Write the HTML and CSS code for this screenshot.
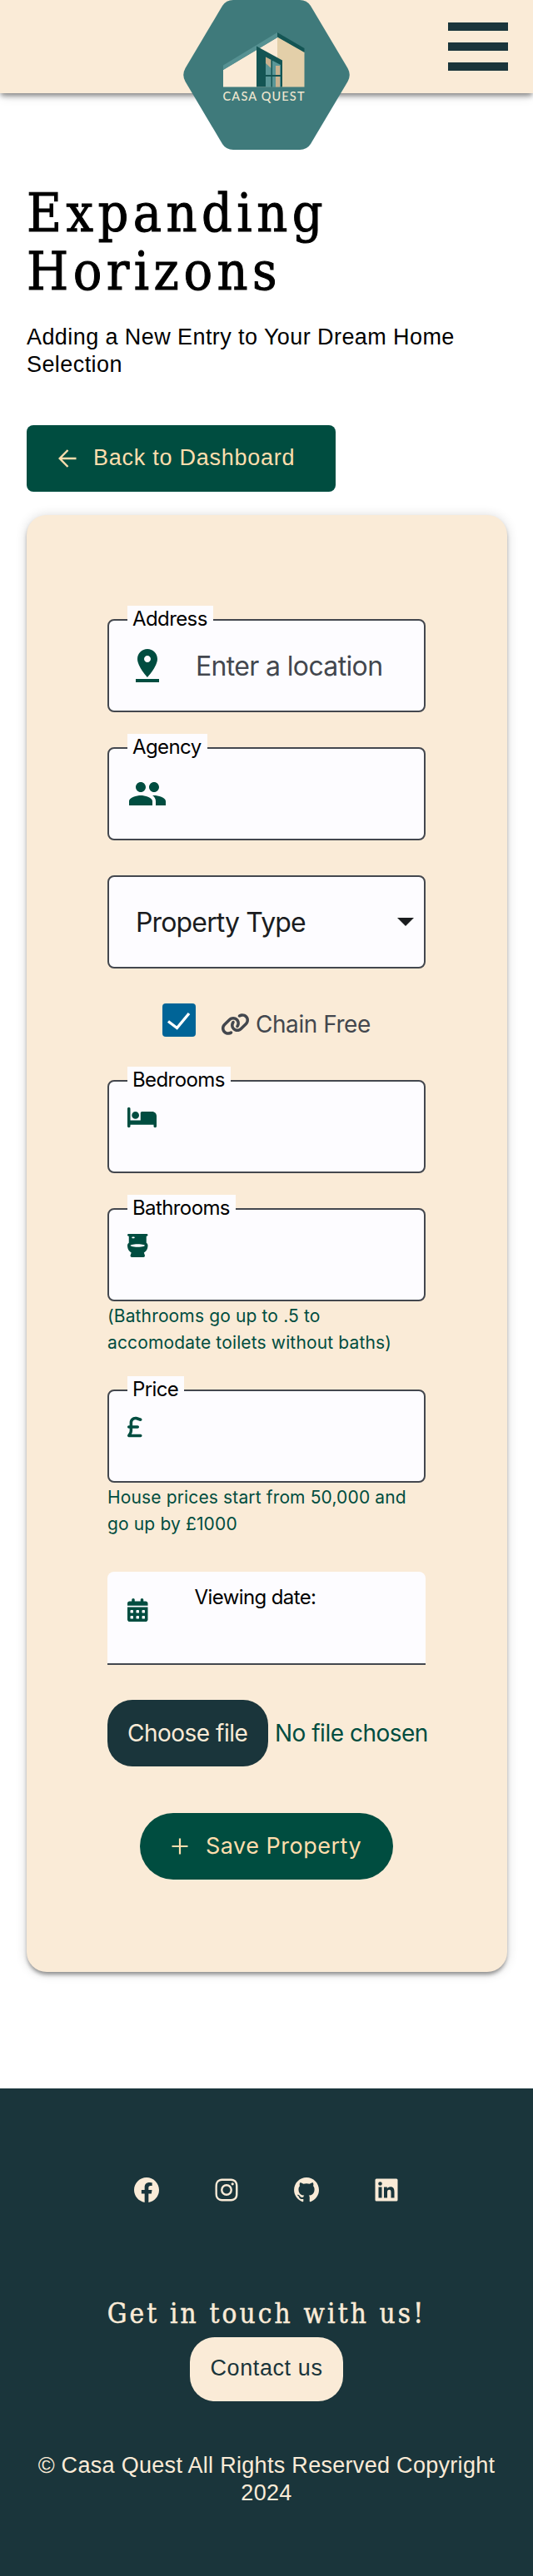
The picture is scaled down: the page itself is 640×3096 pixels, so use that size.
FILE: index.html
```html
<!DOCTYPE html>
<html lang="en">
<head>
<meta charset="utf-8">
<title>Casa Quest</title>
<link rel="stylesheet" href="styles.css">
</head>
<body>
<header class="header">
  <svg class="logo" width="200" height="180" viewBox="0 0 200 180">
    <path d="M60 0H140Q148.500 0 153 7L197.500 82Q202 90 197.500 98L153 173Q148.500 180 140 180H60Q51.500 180 47 173L2.500 98Q-2 90 2.500 82L47 7Q51.500 0 60 0Z" fill="#3f7a7b"/>
    <path d="M48 84L113 45V104.500H48Z" fill="#faebd7"/>
    <path d="M113 44L145.500 62.500V104.500H113Z" fill="#e3cfa9"/>
    <path d="M48 78.500L113 39V45L48 84Z" fill="#569192"/>
    <path d="M113 39L145.500 58V63L113 44.500Z" fill="#145554"/>
    <path d="M88 55.500L119 72.500V104.500H88Z" fill="#145554"/>
    <path d="M99 68.500L117 78V104.500H99Z" fill="#5a9697"/>
    <path d="M99 68.500L105.500 72V82L99 76ZM111 79H116V104.500H111Z" fill="#c9b18e"/>
    <path d="M105.500 72H107V104.500H105.500ZM99 90H117V92H99Z" fill="#145554"/>
    <text class="logo-name" x="47.500" y="120.500" textLength="98">CASA QUEST</text>
  </svg>
  <button class="menu" aria-label="Menu"><span class="bar"></span><span class="bar"></span><span class="bar"></span></button>
</header>

<main class="main">
  <h1 class="title">Expanding<br>Horizons</h1>
  <p class="lead">Adding a New Entry to Your Dream Home<br>Selection</p>
  <a class="btn back">
    <svg width="22" height="22" viewBox="0 0 22 22" fill="none" stroke="currentColor" stroke-width="2.400"><path d="M21.500 11H2M11.500 1L1.700 11L11.500 21"/></svg>
    <span>Back to Dashboard</span>
  </a>

  <form class="card">
    <div class="field">
      <label class="label">Address</label>
      <svg class="icon-md" viewBox="0 0 24 24"><path d="M18 8c0-3.310-2.690-6-6-6S6 4.690 6 8c0 4.500 6 11 6 11s6-6.500 6-11zm-8 0c0-1.100.9-2 2-2s2 .9 2 2-.89 2-2 2c-1.100 0-2-.9-2-2zM5 20v2h14v-2H5z"/></svg>
      <span class="placeholder">Enter a location</span>
    </div>
    <div class="field">
      <label class="label">Agency</label>
      <svg class="icon-md" viewBox="0 0 24 24"><path d="M16 11c1.660 0 2.990-1.340 2.990-3S17.660 5 16 5c-1.660 0-3 1.340-3 3s1.340 3 3 3zm-8 0c1.660 0 2.990-1.340 2.990-3S9.660 5 8 5C6.340 5 5 6.340 5 8s1.340 3 3 3zm0 2c-2.330 0-7 1.170-7 3.500V19h14v-2.500c0-2.330-4.670-3.500-7-3.500zm8 0c-.29 0-.62.02-.97.05 1.160.84 1.970 1.970 1.970 3.450V19h6v-2.500c0-2.330-4.670-3.500-7-3.500z"/></svg>
    </div>
    <div class="field select">
      <span>Property Type</span>
      <svg width="20" height="10" viewBox="0 0 20 10"><path d="M0 0H20L10 10Z" fill="#1a1c1e"/></svg>
    </div>
    <div class="check-row">
      <span class="checkbox"><svg width="40" height="40" viewBox="0 0 40 40" fill="none" stroke="#fff" stroke-width="3.400"><path d="M7 21.500L17.500 29.500L32 12"/></svg></span>
      <svg class="chain" viewBox="0 0 640 512"><path d="M579.800 267.700c56.500-56.500 56.500-148 0-204.500c-50-50-128.800-56.500-186.300-15.400l-1.600 1.100c-14.400 10.300-17.700 30.300-7.400 44.600s30.300 17.700 44.600 7.400l1.600-1.100c32.100-22.900 76-19.300 103.800 8.600c31.500 31.500 31.500 82.500 0 114L422.300 334.800c-31.500 31.500-82.500 31.500-114 0c-27.900-27.900-31.500-71.800-8.600-103.800l1.100-1.600c10.300-14.400 6.900-34.400-7.400-44.600s-34.400-6.900-44.600 7.400l-1.100 1.600C206.500 251.200 213 330 263 380c56.500 56.500 148 56.500 204.500 0L579.800 267.700zM60.200 244.300c-56.500 56.500-56.500 148 0 204.500c50 50 128.800 56.500 186.300 15.400l1.600-1.100c14.400-10.300 17.700-30.300 7.400-44.600s-30.300-17.700-44.600-7.400l-1.600 1.100c-32.100 22.900-76 19.300-103.800-8.600C74 372 74 321 105.500 289.500L217.700 177.200c31.500-31.500 82.500-31.500 114 0c27.900 27.900 31.500 71.800 8.600 103.900l-1.100 1.600c-10.300 14.400-6.900 34.400 7.400 44.600s34.400 6.900 44.600-7.400l1.100-1.600C433.500 260.800 427 182 377 132c-56.500-56.500-148-56.500-204.500 0L60.200 244.300z"/></svg>
      <span class="check-text">Chain Free</span>
    </div>
    <div class="field">
      <label class="label">Bedrooms</label>
      <svg class="icon-fa" viewBox="0 0 640 512"><path d="M32 32c17.700 0 32 14.300 32 32V320H288V160c0-17.700 14.300-32 32-32H544c53 0 96 43 96 96V448c0 17.700-14.300 32-32 32s-32-14.300-32-32V416H64v32c0 17.700-14.300 32-32 32s-32-14.300-32-32V64C0 46.300 14.300 32 32 32zm144 96a80 80 0 1 1 0 160 80 80 0 1 1 0-160z"/></svg>
    </div>
    <div class="field">
      <label class="label">Bathrooms</label>
      <svg class="icon-fa" viewBox="0 0 448 512"><path d="M24 0C10.700 0 0 10.700 0 24S10.700 48 24 48h8V196.900c-1.900 1.400-3.800 2.900-5.600 4.400C10.900 214.500 0 232.900 0 256c0 46.900 14.300 84.100 37 112.500c14.200 17.700 31.100 31.300 48.500 41.800L65.600 469.900c-3.300 9.800-1.600 20.500 4.400 28.800s15.700 13.300 26 13.300H352c10.300 0 19.900-4.900 26-13.300s7.700-19.100 4.400-28.800l-19.800-59.500c17.400-10.500 34.300-24.100 48.500-41.800c22.700-28.400 37-65.500 37-112.500c0-23.100-10.900-41.500-26.400-54.600c-1.800-1.500-3.700-3-5.600-4.400V48h8c13.300 0 24-10.700 24-24s-10.700-24-24-24H24zM384 256.300c0 1-.3 2.600-3.800 5.600c-4.800 4.100-14 9-29.300 13.400C320.500 284 276.100 288 224 288s-96.500-4-126.900-12.800c-15.300-4.400-24.500-9.300-29.300-13.400c-3.500-3-3.800-4.600-3.800-5.600l0-.3 0-.1c0-1 0-2.500 3.800-5.800c4.800-4.100 14-9 29.300-13.400C127.500 228 171.900 224 224 224s96.500 4 126.900 12.800c15.300 4.400 24.500 9.300 29.300 13.400c3.800 3.200 3.800 4.800 3.800 5.800l0 .1 0 .3zM112 64h32c8.800 0 16 7.200 16 16s-7.200 16-16 16H112c-8.800 0-16-7.200-16-16s7.200-16 16-16z"/></svg>
    </div>
    <p class="hint">(Bathrooms go up to .5 to<br>accomodate toilets without baths)</p>
    <div class="field">
      <label class="label">Price</label>
      <svg class="icon-fa" viewBox="0 0 320 512"><path d="M112 160.400c0-35.500 28.800-64.400 64.400-64.400c6.900 0 13.800 1.100 20.400 3.300l81.200 27.100c16.800 5.600 34.900-3.500 40.500-20.200s-3.500-34.900-20.200-40.500L217 38.600c-13.100-4.400-26.800-6.600-40.600-6.600C105.500 32 48 89.500 48 160.400V224H32c-17.700 0-32 14.300-32 32s14.300 32 32 32H48v44.500c0 17.400-4.700 34.500-13.700 49.400L4.600 431.500c-5.900 9.900-6.100 22.200-.4 32.200S20.500 480 32 480H288c17.700 0 32-14.300 32-32s-14.300-32-32-32H88.500l.7-1.100C104.100 390 112 361.500 112 332.500V288H224c17.700 0 32-14.300 32-32s-14.300-32-32-32H112V160.400z"/></svg>
    </div>
    <p class="hint">House prices start from 50,000 and<br>go up by £1000</p>
    <div class="field date">
      <svg class="icon-fa" viewBox="0 0 448 512"><path fill-rule="evenodd" d="M128 0c17.700 0 32 14.300 32 32V64H288V32c0-17.700 14.300-32 32-32s32 14.300 32 32V64h48c26.500 0 48 21.500 48 48v48H0V112C0 85.500 21.500 64 48 64H96V32c0-17.700 14.300-32 32-32zM0 192H448V464c0 26.500-21.500 48-48 48H48c-26.500 0-48-21.500-48-48V192zM80 256q-16 0-16 16v32q0 16 16 16h32q16 0 16-16v-32q0-16-16-16zm128 0q-16 0-16 16v32q0 16 16 16h32q16 0 16-16v-32q0-16-16-16zm128 0q-16 0-16 16v32q0 16 16 16h32q16 0 16-16v-32q0-16-16-16zM80 384q-16 0-16 16v32q0 16 16 16h32q16 0 16-16v-32q0-16-16-16zm128 0q-16 0-16 16v32q0 16 16 16h32q16 0 16-16v-32q0-16-16-16zm128 0q-16 0-16 16v32q0 16 16 16h32q16 0 16-16v-32q0-16-16-16z"/></svg>
      <span class="date-label">Viewing date:</span>
    </div>
    <div class="file-row">
      <span class="file-btn">Choose file</span>
      <span class="file-name">No file chosen</span>
    </div>
    <a class="btn save">
      <svg width="20" height="20" viewBox="0 0 20 20" stroke="currentColor" stroke-width="2.200"><path d="M.5 10H19.500M10 .5V19.500"/></svg>
      <span>Save Property</span>
    </a>
  </form>
</main>

<footer class="footer">
  <nav class="social">
    <svg viewBox="0 0 24 24"><path d="M12 2.040C6.500 2.040 2 6.530 2 12.060C2 17.060 5.660 21.210 10.440 21.960V14.960H7.900V12.060H10.440V9.850C10.440 7.340 11.930 5.960 14.220 5.960C15.310 5.960 16.450 6.150 16.450 6.150V8.620H15.190C13.950 8.620 13.560 9.390 13.560 10.160V12.060H16.340L15.890 14.960H13.560V21.960A10 10 0 0 0 22 12.060C22 6.530 17.500 2.040 12 2.040Z"/></svg>
    <svg viewBox="0 0 24 24"><path d="M11.999 7.377a4.623 4.623 0 1 0 0 9.248 4.623 4.623 0 0 0 0-9.248zm0 7.627a3.004 3.004 0 1 1 0-6.008 3.004 3.004 0 0 1 0 6.008z"/><circle cx="16.806" cy="7.207" r="1.078"/><path d="M20.533 6.111A4.605 4.605 0 0 0 17.900 3.479a6.606 6.606 0 0 0-2.186-.42c-.963-.042-1.268-.054-3.710-.054s-2.755 0-3.710.054a6.554 6.554 0 0 0-2.184.42 4.600 4.600 0 0 0-2.633 2.632 6.585 6.585 0 0 0-.419 2.186c-.043.962-.056 1.267-.056 3.710 0 2.442 0 2.753.056 3.710.015.748.156 1.486.419 2.187a4.610 4.610 0 0 0 2.634 2.632 6.584 6.584 0 0 0 2.185.45c.963.042 1.268.055 3.710.055s2.755 0 3.710-.055a6.615 6.615 0 0 0 2.186-.419 4.613 4.613 0 0 0 2.633-2.633c.263-.7.404-1.438.419-2.186.043-.962.056-1.267.056-3.710s0-2.753-.056-3.710a6.581 6.581 0 0 0-.421-2.217zm-1.218 9.532a5.043 5.043 0 0 1-.311 1.688 2.987 2.987 0 0 1-1.712 1.711 4.985 4.985 0 0 1-1.670.311c-.95.044-1.218.055-3.654.055-2.438 0-2.687 0-3.655-.055a4.960 4.960 0 0 1-1.669-.311 2.985 2.985 0 0 1-1.719-1.711 5.080 5.080 0 0 1-.311-1.669c-.043-.95-.053-1.218-.053-3.654 0-2.437 0-2.686.053-3.655a5.038 5.038 0 0 1 .311-1.687c.305-.789.93-1.410 1.719-1.712a5.010 5.010 0 0 1 1.669-.311c.951-.043 1.218-.055 3.655-.055s2.687 0 3.654.055a4.960 4.960 0 0 1 1.670.311 2.991 2.991 0 0 1 1.712 1.712 5.080 5.080 0 0 1 .311 1.669c.043.951.055 1.218.055 3.655 0 2.436 0 2.698-.043 3.654h-.011z"/></svg>
    <svg viewBox="0 0 24 24"><path d="M12.026 2c-5.509 0-9.974 4.465-9.974 9.974 0 4.406 2.857 8.145 6.821 9.465.499.09.679-.217.679-.481 0-.237-.008-.865-.011-1.696-2.775.602-3.361-1.338-3.361-1.338-.452-1.152-1.107-1.459-1.107-1.459-.905-.619.069-.605.069-.605 1.002.07 1.527 1.028 1.527 1.028.89 1.524 2.336 1.084 2.902.829.091-.645.351-1.085.635-1.334-2.214-.251-4.542-1.107-4.542-4.930 0-1.087.389-1.979 1.024-2.675-.101-.253-.446-1.268.099-2.640 0 0 .837-.269 2.742 1.021a9.582 9.582 0 0 1 2.496-.336 9.554 9.554 0 0 1 2.496.336c1.906-1.291 2.742-1.021 2.742-1.021.545 1.372.203 2.387.099 2.640.64.696 1.024 1.587 1.024 2.675 0 3.833-2.330 4.675-4.552 4.922.355.308.675.916.675 1.846 0 1.334-.012 2.410-.012 2.737 0 .267.178.577.687.479C19.146 20.115 22 16.379 22 11.974 22 6.465 17.535 2 12.026 2z"/></svg>
    <svg viewBox="0 0 24 24"><path d="M20 3H4a1 1 0 0 0-1 1v16a1 1 0 0 0 1 1h16a1 1 0 0 0 1-1V4a1 1 0 0 0-1-1zM8.339 18.337H5.667v-8.590h2.672v8.590zM7.003 8.574a1.548 1.548 0 1 1 0-3.096 1.548 1.548 0 0 1 0 3.096zm11.335 9.763h-2.669V14.160c0-.996-.018-2.277-1.388-2.277-1.390 0-1.601 1.086-1.601 2.207v4.248h-2.667v-8.590h2.560v1.174h.037c.355-.675 1.227-1.387 2.524-1.387 2.704 0 3.203 1.778 3.203 4.092v4.710z"/></svg>
  </nav>
  <h2 class="touch">Get in touch with us!</h2>
  <a class="contact">Contact us</a>
  <p class="copy">© Casa Quest All Rights Reserved Copyright<br>2024</p>
</footer>
</body>
</html>
```
FILE: styles.css
```css
* { box-sizing: border-box; }
body { margin: 0; background: #fff; color: #000; font-family: "Liberation Sans", sans-serif; }
h1, h2, p { margin: 0; font-weight: 400; }
svg { display: block; flex: none; }

.header {
  position: relative; height: 112px; padding: 0 30px; background: #faebd7;
  display: flex; align-items: center; justify-content: flex-end;
  box-shadow: 0 4px 6px -1px rgba(0,0,0,.42), 0 6px 12px -2px rgba(0,0,0,.12);
}
.logo { position: absolute; left: 220px; top: 0; }
.logo-name { font: 500 14.500px Lato, sans-serif; fill: #efe6cf; }
.menu { display: flex; flex-direction: column; gap: 14px; padding: 0; border: 0; background: none; }
.bar { width: 72px; height: 10px; background: #1a353b; }

.main { padding: 109px 31px 140px 32px; display: flex; flex-direction: column; align-items: flex-start; }
.title { font-family: "DejaVu Serif Condensed", "DejaVu Serif", serif; font-stretch: condensed; font-size: 64px; line-height: 70px; letter-spacing: 5.450px; -webkit-text-stroke: 1px currentColor; }
.lead { margin-top: 28px; font-size: 27px; line-height: 33px; letter-spacing: .42px; white-space: nowrap; }

.btn { display: flex; align-items: center; height: 80px; background: #004d40; color: #ffdead; font-size: 27px; white-space: nowrap; }
.btn span { padding-bottom: 2px; }
.back { width: 371px; margin-top: 56px; padding-left: 38px; gap: 20px; border-radius: 8px; letter-spacing: .75px; }
.save { width: 304px; margin: 56px 0 0 39px; padding-left: 38px; gap: 21px; border-radius: 40px; letter-spacing: .5px; }

.card {
  width: 577px; height: 1751px; margin-top: 28px; padding: 125px 0 0 97px;
  display: flex; flex-direction: column; align-items: flex-start;
  border-radius: 24px; background: #faebd7; font-family: Inter, sans-serif;
  box-shadow: 0 4px 5px -1px rgba(0,0,0,.4), 0 1px 14px rgba(0,0,0,.16);
}
.field {
  position: relative; display: flex; align-items: flex-start; width: 382px; height: 112px; padding: 0 22px;
  border: 2px solid #43474e; border-radius: 8px; background: #fdfcff;
}
.field + .field { margin-top: 42px; }
.label {
  position: absolute; left: 22px; top: -18px; height: 34px; padding: 0 7px 0 6px;
  background: #fdfcff; font-size: 24px; line-height: 31px; letter-spacing: -.6px;
}
.icon-md { width: 48px; height: 48px; margin-top: 30px; fill: #004d40; }
.icon-fa { height: 28px; margin-top: 29px; fill: #004d40; }
.placeholder { margin-left: 34px; font-size: 32px; line-height: 110px; letter-spacing: -.65px; color: #43474e; white-space: nowrap; }
.select { align-items: center; justify-content: space-between; padding: 0 12px 0 32px; font-size: 32px; letter-spacing: -.85px; color: #1a1c1e; }

.check-row { display: flex; align-items: flex-start; height: 50px; margin: 42px 0 42px 66px; color: #43474e; }
.checkbox { width: 40px; height: 40px; border-radius: 4px; background: #006497; }
.chain { width: 35px; height: 28px; margin: 11px 0 0 30px; fill: #43474e; }
.check-text { margin-left: 7px; font-size: 28px; line-height: 50px; letter-spacing: -.45px; }

.hint { margin: 2px 0 40px; font-size: 21px; line-height: 32px; letter-spacing: .14px; color: #004d40; white-space: nowrap; }
.date { margin-top: 1px; padding: 0 24px; border-width: 0 0 2px; border-radius: 8px 8px 0 0; }
.date .icon-fa { margin-top: 32px; }
.date-label { margin-left: 56px; font-size: 24px; line-height: 61px; letter-spacing: -.6px; }

.file-row { display: flex; align-items: center; height: 80px; margin-top: 42px; font-size: 28px; letter-spacing: -.5px; white-space: nowrap; }
.file-btn { width: 193px; border-radius: 30px; background: #1a353b; color: #faebd7; line-height: 80px; padding-left: 24px; }
.file-name { margin-left: 8px; color: #004d40; }

.footer { height: 586px; padding-top: 104px; background: #1a353b; color: #faebd7; display: flex; flex-direction: column; align-items: center; }
.social { display: flex; justify-content: space-between; width: 324px; }
.social svg { width: 36px; height: 36px; fill: #faebd7; }
.touch { margin: 111px 0 8px; font-family: "DejaVu Serif Condensed", "DejaVu Serif", serif; font-stretch: condensed; font-size: 33px; line-height: 40px; letter-spacing: 3.150px; white-space: nowrap; -webkit-text-stroke: .5px currentColor; }
.contact { width: 184px; height: 77px; border-radius: 30px; background: #faebd7; color: #1a353b; font-size: 27px; line-height: 75px; letter-spacing: .6px; text-align: center; }
.copy { margin-top: 61px; font-size: 27px; line-height: 33px; letter-spacing: .3px; text-align: center; white-space: nowrap; }
```
